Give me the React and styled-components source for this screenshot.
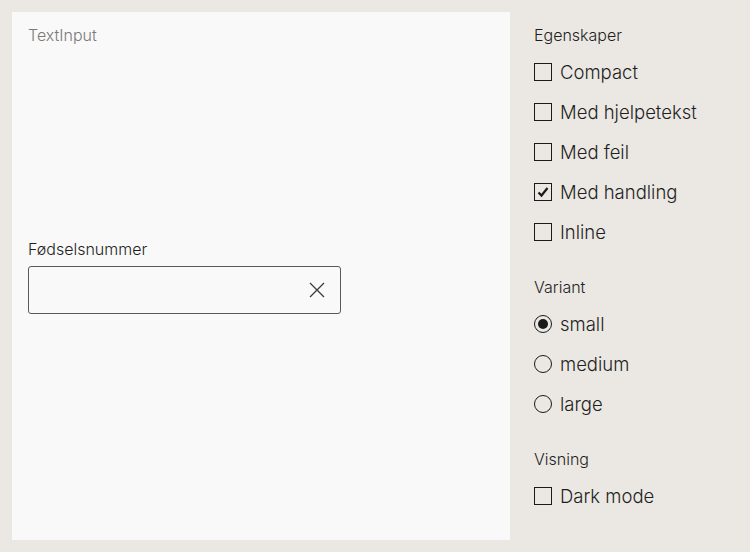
import React, { useState } from 'react';
import styled, { createGlobalStyle } from 'styled-components';

const GlobalStyle = createGlobalStyle`
  html, body {
    margin: 0;
    padding: 0;
    background: #ebe8e3;
    font-family: Inter, "Noto Sans", sans-serif;
  }
`;

const ClearIcon = () => (
  <svg width="18" height="18" viewBox="0 0 18 18" fill="none" stroke="#3b3b3b" strokeWidth="1.3">
    <path d="M2 2l14 14M16 2L2 16" />
  </svg>
);

const Tick = () => (
  <svg width="14" height="14" viewBox="0 0 14 14" fill="none" stroke="#1a1a1a" strokeWidth="2.2">
    <path d="M2.5 7.5l3 3 6-7.5" />
  </svg>
);

const App = () => {
  const [props, setProps] = useState({ compact: false, help: false, error: false, action: true, inline: false });
  const [variant, setVariant] = useState('small');
  const [dark, setDark] = useState(false);

  const toggle = (key) => setProps({ ...props, [key]: !props[key] });

  const checks = [
    ['compact', 'Compact'],
    ['help', 'Med hjelpetekst'],
    ['error', 'Med feil'],
    ['action', 'Med handling'],
    ['inline', 'Inline'],
  ];

  return (
    <Page>
      <GlobalStyle />
      <Preview>
        <PreviewTitle>TextInput</PreviewTitle>
        <Stage>
          <Field>
            <Label>Fødselsnummer</Label>
            <InputBox>
              <Input />
              <ClearButton>
                <ClearIcon />
              </ClearButton>
            </InputBox>
          </Field>
        </Stage>
      </Preview>

      <Sidebar>
        <Group>
          <Heading>Egenskaper</Heading>
          {checks.map(([key, label]) => (
            <Option key={key} onClick={() => toggle(key)}>
              <Box>{props[key] && <Tick />}</Box>
              {label}
            </Option>
          ))}
        </Group>

        <Group>
          <Heading>Variant</Heading>
          {['small', 'medium', 'large'].map((v) => (
            <Option key={v} onClick={() => setVariant(v)}>
              <Radio checked={variant === v} />
              {v}
            </Option>
          ))}
        </Group>

        <Group>
          <Heading>Visning</Heading>
          <Option onClick={() => setDark(!dark)}>
            <Box>{dark && <Tick />}</Box>
            Dark mode
          </Option>
        </Group>
      </Sidebar>
    </Page>
  );
};

export default App;

const Page = styled.div`
  display: flex;
  gap: 24px;
  padding: 12px;
  height: 552px;
  box-sizing: border-box;
`;

const Preview = styled.div`
  width: 498px;
  height: 528px;
  background: #f9f9f9;
  padding: 16px;
  box-sizing: border-box;
  display: flex;
  flex-direction: column;
`;

const PreviewTitle = styled.div`
  font-size: 16px;
  line-height: 14px;
  color: #7a7a7a;
  font-weight: 300;
`;

const Stage = styled.div`
  flex: 1;
  display: flex;
  align-items: center;
`;

const Field = styled.div`
  display: flex;
  flex-direction: column;
  gap: 7px;
  margin-top: -14px;
`;

const Label = styled.label`
  font-size: 16px;
  font-weight: 300;
  color: #1f1f1f;
`;

const InputBox = styled.div`
  width: 313px;
  height: 48px;
  box-sizing: border-box;
  border: 1px solid #5a5a5a;
  border-radius: 3px;
  display: flex;
  align-items: center;
  padding: 0 14px 0 12px;
`;

const Input = styled.input`
  flex: 1;
  border: none;
  background: transparent;
  outline: none;
  font: inherit;
  min-width: 0;
`;

const ClearButton = styled.span`
  display: flex;
`;

const Sidebar = styled.div`
  display: flex;
  flex-direction: column;
  gap: 32px;
  padding-top: 12px;
`;

const Group = styled.div`
  display: flex;
  flex-direction: column;
  gap: 16px;
`;

const Heading = styled.div`
  font-size: 16px;
  font-weight: 300;
  line-height: 22px;
  color: #1f1f1f;
  margin-bottom: -2px;
`;

const Option = styled.div`
  display: flex;
  align-items: center;
  gap: 8px;
  height: 24px;
  font-size: 18.5px;
  font-weight: 300;
  color: #1f1f1f;
  cursor: pointer;
`;

const Box = styled.span`
  width: 18px;
  height: 18px;
  box-sizing: border-box;
  border: 1.5px solid #1a1a1a;
  display: flex;
  align-items: center;
  justify-content: center;
`;

const Radio = styled.span`
  width: 18px;
  height: 18px;
  box-sizing: border-box;
  border: 1.5px solid #1a1a1a;
  border-radius: 50%;
  display: flex;
  align-items: center;
  justify-content: center;

  &::after {
    content: '';
    width: 10px;
    height: 10px;
    border-radius: 50%;
    background: #1a1a1a;
    display: ${(p) => (p.checked ? 'block' : 'none')};
  }
`;
